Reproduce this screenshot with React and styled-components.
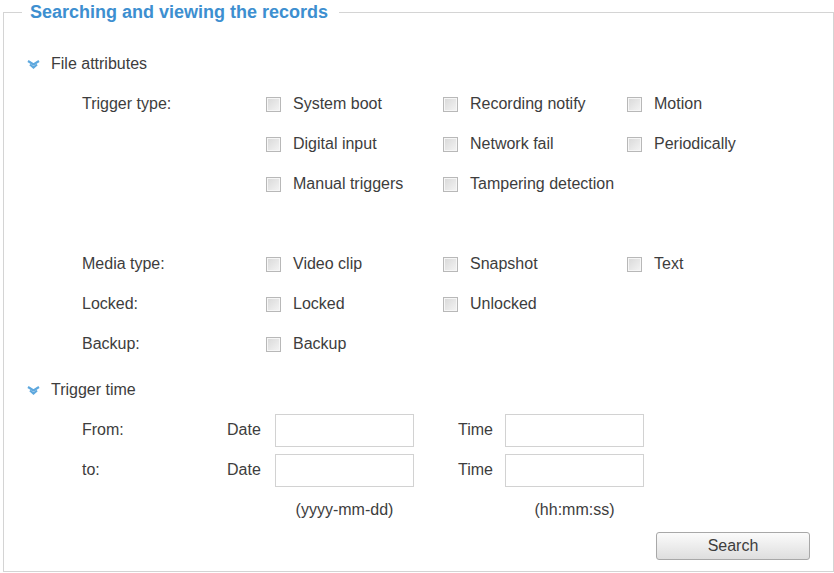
import React from 'react'
import styled, { createGlobalStyle } from 'styled-components'

const GlobalStyle = createGlobalStyle`
  body {
    margin: 0;
    background: #ffffff;
    font-family: "Liberation Sans", Arial, sans-serif;
    color: #3d3d3d;
  }
`

const Frame = styled.fieldset`
  box-sizing: border-box;
  width: 831px;
  margin: 2px 0 0 3px;
  padding: 22px 23px 11px 23px;
  border: 1px solid #d4d4d4;
`

const Legend = styled.legend`
  margin-left: -5px;
  padding: 0 11px 0 8px;
  font-size: 18px;
  line-height: 20px;
  font-weight: bold;
  color: #3d8fd0;
`

const SectionHead = styled.div`
  display: flex;
  align-items: center;
  gap: 11px;
  height: 40px;
  margin-top: ${p => p.$top || 0}px;
  font-size: 16px;
`

const Rows = styled.div`
  display: grid;
  grid-template-columns: ${p => p.$cols};
  grid-auto-rows: 40px;
  align-items: center;
  padding-left: 55px;
  font-size: 16px;
`

const Label = styled.div`
  grid-column: 1;
`

const Option = styled.label`
  display: flex;
  align-items: center;
  gap: 12px;
  white-space: nowrap;
`

const Box = styled.span`
  box-sizing: border-box;
  width: 15px;
  height: 15px;
  border: 1px solid #b8b8b8;
  background: linear-gradient(135deg, #d8d8d8, #f4f4f4);
  box-shadow: inset 0 0 0 1px #f6f6f6;
`

const Spacer = styled.div`
  grid-column: 1 / -1;
`

const Field = styled.div`
  box-sizing: border-box;
  width: 139px;
  height: 33px;
  border: 1px solid #d2d2d2;
  background: #fff;
`

const Hint = styled.div`
  grid-column: ${p => p.$col};
  width: 139px;
  text-align: center;
`

const Footer = styled.div`
  display: flex;
  justify-content: flex-end;
  margin-top: 2px;
`

const Button = styled.button`
  width: 154px;
  height: 28px;
  border: 1px solid #a8a8a8;
  border-radius: 3px;
  background: linear-gradient(#fbfbfb, #dedede);
  font-family: "Liberation Sans", Arial, sans-serif;
  font-size: 16px;
  color: #3d3d3d;
`

// double chevron pointing down, as on the section headers
const Chevron = () => (
  <svg width="13" height="9" viewBox="0 0 13 9">
    <path d="M1 1 L6.5 4.5 L12 1" fill="none" stroke="#5ea8de" strokeWidth="2.2" />
    <path d="M3 4.5 L6.5 7.5 L10 4.5" fill="none" stroke="#5ea8de" strokeWidth="2.2" />
  </svg>
)

const Check = ({ children }) => (
  <Option>
    <Box />
    {children}
  </Option>
)

const attrCols = '184px 177px 184px auto'
const timeCols = '145px 48px 183px 47px 139px'

export default function App() {
  return (
    <>
      <GlobalStyle />
      <Frame>
        <Legend>Searching and viewing the records</Legend>

        <SectionHead>
          <Chevron />
          File attributes
        </SectionHead>
        <Rows $cols={attrCols}>
          <Label>Trigger type:</Label>
          <Check>System boot</Check>
          <Check>Recording notify</Check>
          <Check>Motion</Check>
          <Label />
          <Check>Digital input</Check>
          <Check>Network fail</Check>
          <Check>Periodically</Check>
          <Label />
          <Check>Manual triggers</Check>
          <Check>Tampering detection</Check>
          <Spacer />
          <Label>Media type:</Label>
          <Check>Video clip</Check>
          <Check>Snapshot</Check>
          <Check>Text</Check>
          <Label>Locked:</Label>
          <Check>Locked</Check>
          <Check>Unlocked</Check>
          <Label>Backup:</Label>
          <Check>Backup</Check>
        </Rows>

        <SectionHead $top={6}>
          <Chevron />
          Trigger time
        </SectionHead>
        <Rows $cols={timeCols}>
          <Label>From:</Label>
          <div>Date</div>
          <Field />
          <div>Time</div>
          <Field />
          <Label>to:</Label>
          <div>Date</div>
          <Field />
          <div>Time</div>
          <Field />
          <Hint $col={3}>(yyyy-mm-dd)</Hint>
          <Hint $col={5}>(hh:mm:ss)</Hint>
        </Rows>

        <Footer>
          <Button>Search</Button>
        </Footer>
      </Frame>
    </>
  )
}
